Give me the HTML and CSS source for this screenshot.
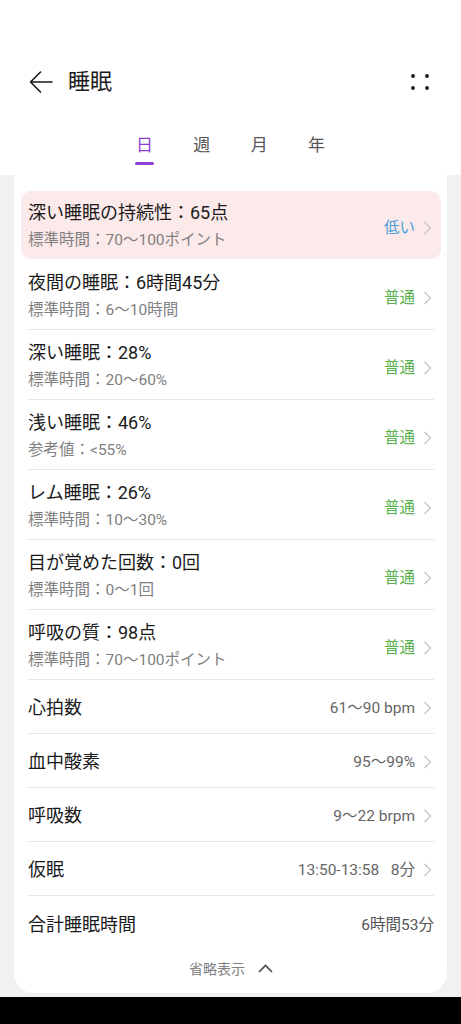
FILE: index.html
```html
<!DOCTYPE html>
<html lang="ja">
<head>
<meta charset="utf-8">
<link rel="stylesheet" href="styles.css">
</head>
<body>
<div class="screen">
  <div class="status"></div>
  <header class="appbar">
    <svg class="back" width="24" height="22" viewBox="0 0 24 22"><path d="M23 11H1.5M11.5 1L1.5 11l10 10" fill="none" stroke="#1a1a1a" stroke-width="1.6" stroke-linecap="round" stroke-linejoin="round"/></svg>
    <h1 class="title">睡眠</h1>
    <svg class="more" width="18" height="16" viewBox="0 0 18 16"><circle cx="2" cy="2" r="1.9" fill="#1a1a1a"/><circle cx="16" cy="2" r="1.9" fill="#1a1a1a"/><circle cx="2" cy="14" r="1.9" fill="#1a1a1a"/><circle cx="16" cy="14" r="1.9" fill="#1a1a1a"/></svg>
  </header>
  <nav class="tabs">
    <div class="tab active"><span>日</span><i class="bar"></i></div>
    <div class="tab"><span>週</span></div>
    <div class="tab"><span>月</span></div>
    <div class="tab"><span>年</span></div>
  </nav>
  <main class="content">
    <section class="card">
      <div class="row two alert">
        <div class="text"><div class="label">深い睡眠の持続性：65点</div><div class="sub">標準時間：70～100ポイント</div></div>
        <div class="val low">低い</div>
        <svg class="chev" width="9" height="14" viewBox="0 0 9 14"><path d="M1.5 1l6 6-6 6" fill="none" stroke="#c6c6c6" stroke-width="1.3"/></svg>
      </div>
      <div class="row two">
        <div class="text"><div class="label">夜間の睡眠：6時間45分</div><div class="sub">標準時間：6～10時間</div></div>
        <div class="val ok">普通</div>
        <svg class="chev" width="9" height="14" viewBox="0 0 9 14"><path d="M1.5 1l6 6-6 6" fill="none" stroke="#c6c6c6" stroke-width="1.3"/></svg>
      </div>
      <div class="row two">
        <div class="text"><div class="label">深い睡眠：28%</div><div class="sub">標準時間：20～60%</div></div>
        <div class="val ok">普通</div>
        <svg class="chev" width="9" height="14" viewBox="0 0 9 14"><path d="M1.5 1l6 6-6 6" fill="none" stroke="#c6c6c6" stroke-width="1.3"/></svg>
      </div>
      <div class="row two">
        <div class="text"><div class="label">浅い睡眠：46%</div><div class="sub">参考値：&lt;55%</div></div>
        <div class="val ok">普通</div>
        <svg class="chev" width="9" height="14" viewBox="0 0 9 14"><path d="M1.5 1l6 6-6 6" fill="none" stroke="#c6c6c6" stroke-width="1.3"/></svg>
      </div>
      <div class="row two">
        <div class="text"><div class="label">レム睡眠：26%</div><div class="sub">標準時間：10～30%</div></div>
        <div class="val ok">普通</div>
        <svg class="chev" width="9" height="14" viewBox="0 0 9 14"><path d="M1.5 1l6 6-6 6" fill="none" stroke="#c6c6c6" stroke-width="1.3"/></svg>
      </div>
      <div class="row two">
        <div class="text"><div class="label">目が覚めた回数：0回</div><div class="sub">標準時間：0～1回</div></div>
        <div class="val ok">普通</div>
        <svg class="chev" width="9" height="14" viewBox="0 0 9 14"><path d="M1.5 1l6 6-6 6" fill="none" stroke="#c6c6c6" stroke-width="1.3"/></svg>
      </div>
      <div class="row two">
        <div class="text"><div class="label">呼吸の質：98点</div><div class="sub">標準時間：70～100ポイント</div></div>
        <div class="val ok">普通</div>
        <svg class="chev" width="9" height="14" viewBox="0 0 9 14"><path d="M1.5 1l6 6-6 6" fill="none" stroke="#c6c6c6" stroke-width="1.3"/></svg>
      </div>
      <div class="row one">
        <div class="label">心拍数</div>
        <div class="val grey">61～90 bpm</div>
        <svg class="chev" width="9" height="14" viewBox="0 0 9 14"><path d="M1.5 1l6 6-6 6" fill="none" stroke="#c6c6c6" stroke-width="1.3"/></svg>
      </div>
      <div class="row one">
        <div class="label">血中酸素</div>
        <div class="val grey">95～99%</div>
        <svg class="chev" width="9" height="14" viewBox="0 0 9 14"><path d="M1.5 1l6 6-6 6" fill="none" stroke="#c6c6c6" stroke-width="1.3"/></svg>
      </div>
      <div class="row one">
        <div class="label">呼吸数</div>
        <div class="val grey">9～22 brpm</div>
        <svg class="chev" width="9" height="14" viewBox="0 0 9 14"><path d="M1.5 1l6 6-6 6" fill="none" stroke="#c6c6c6" stroke-width="1.3"/></svg>
      </div>
      <div class="row one">
        <div class="label">仮眠</div>
        <div class="val grey">13:50-13:58&nbsp;&nbsp; 8分</div>
        <svg class="chev" width="9" height="14" viewBox="0 0 9 14"><path d="M1.5 1l6 6-6 6" fill="none" stroke="#c6c6c6" stroke-width="1.3"/></svg>
      </div>
      <div class="row one last">
        <div class="label">合計睡眠時間</div>
        <div class="val total">6時間53分</div>
      </div>
      <div class="more-less">
        <span>省略表示</span>
        <svg width="15" height="9" viewBox="0 0 15 9"><path d="M1 8l6.5-6.5L14 8" fill="none" stroke="#4a4a4a" stroke-width="1.7"/></svg>
      </div>
    </section>
  </main>
  <div class="navbar"></div>
</div>
</body>
</html>
```
FILE: styles.css
```css
* { box-sizing: border-box; }
html, body { margin: 0; padding: 0; }
body {
  width: 461px;
  background: #fff;
  font-family: Roboto, "Noto Sans CJK JP", sans-serif;
  color: #1a1a1a;
}
.screen { display: flex; flex-direction: column; height: 1024px; }
.status { height: 54px; }
.appbar {
  height: 56px;
  display: flex;
  align-items: center;
  padding: 0 32px 0 29px;
}
.back { flex: none; }
.title {
  margin: 0 0 0 15px;
  font-size: 22px;
  font-weight: 400;
  line-height: 30px;
  flex: 1;
}
.more { flex: none; margin-top: -1px; }
.tabs {
  height: 65px;
  display: flex;
  justify-content: center;
  padding-top: 23px;
}
.tab {
  width: 57.3px;
  display: flex;
  flex-direction: column;
  align-items: center;
  font-size: 17px;
  line-height: 24px;
  color: #555;
}
.tab.active { color: #8f3fd6; }
.bar {
  display: block;
  width: 19px;
  height: 2.5px;
  border-radius: 2px;
  background: #8f3fd6;
  margin-top: 5px;
}
.content {
  flex: 1;
  background: #f1f1f1;
  padding: 0 14px 4px 14px;
  display: flex;
}
.card {
  flex: 1;
  background: #fff;
  border-radius: 0 0 20px 20px;
  padding: 16px 13px 0 14px;
  display: flex;
  flex-direction: column;
}
.row {
  display: flex;
  align-items: center;
  border-bottom: 1px solid #e6e6e6;
}
.row.two { height: 70px; padding: 11px 0 8px; align-items: stretch; }
.row.two .val, .row.two .chev { align-self: center; margin-top: 4px; }
.row.alert {
  height: 68px;
  padding: 10px 7px 8px;
  margin: 0 -7px 1px;
  background: #fce9e9;
  border-radius: 10px;
  border-bottom: none;
}
.text { flex: 1; display: flex; flex-direction: column; gap: 4px; }
.label { font-size: 18px; line-height: 24px; color: #1a1a1a; flex: 1; }
.sub { font-size: 15.5px; line-height: 22px; color: #808080; }
.val { font-size: 15.5px; line-height: 22px; }
.low { color: #4a9fda; }
.ok { color: #5cb24f; }
.grey { color: #666; }
.total { color: #555; }
.chev { flex: none; margin-left: 8px; margin-right: 2px; }
.row.one { height: 54px; padding: 3px 0 0; }
.row.one.last { border-bottom: none; }
.more-less {
  height: 43px;
  display: flex;
  justify-content: center;
  align-items: center;
  gap: 13px;
  padding-bottom: 7px;
  font-size: 14px;
  color: #808080;
}
.navbar { height: 27px; background: #000; flex: none; }
```
